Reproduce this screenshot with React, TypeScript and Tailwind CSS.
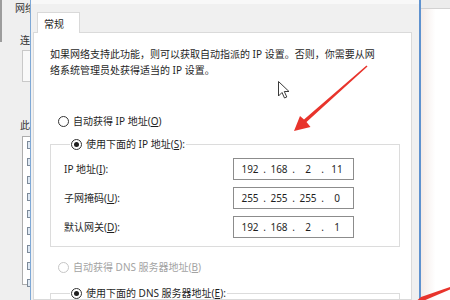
import React from 'react';

const font = { fontFamily: '"Noto Sans", "Noto Sans CJK SC", sans-serif' };

function Radio({ checked = false, disabled = false }: { checked?: boolean; disabled?: boolean }) {
  return (
    <span
      className={`flex w-[11px] h-[11px] shrink-0 items-center justify-center rounded-full border bg-white ${
        disabled ? 'border-[#c6c6c6]' : 'border-[#333333]'
      }`}
    >
      {checked && <span className="block w-[5px] h-[5px] rounded-full bg-[#1e1e1e]" />}
    </span>
  );
}

function RadioRow({
  text,
  hotkey,
  tail = '',
  checked = false,
  disabled = false,
}: {
  text: string;
  hotkey: string;
  tail?: string;
  checked?: boolean;
  disabled?: boolean;
}) {
  return (
    <span
      className={`flex h-[16px] items-center gap-[4px] whitespace-nowrap text-[10px] leading-[16px] ${
        disabled ? 'text-[#a3a3a3]' : 'text-[#1f1f1f]'
      }`}
    >
      <Radio checked={checked} disabled={disabled} />
      <span>
        {text}(<span className="underline">{hotkey}</span>){tail}
      </span>
    </span>
  );
}

function IpBox({ parts }: { parts: string[] }) {
  return (
    <div className="flex h-[22px] w-[121px] items-center border border-[#8c8c8c] bg-white pl-[5px] text-[10px] text-[#1f1f1f]">
      {parts.map((p, i) => (
        <React.Fragment key={i}>
          <span className="w-[22px] text-center">{p}</span>
          {i < 3 && <span className="w-[7px] text-center">.</span>}
        </React.Fragment>
      ))}
    </div>
  );
}

const fields = [
  { label: 'IP 地址', key: 'I', parts: ['192', '168', '2', '11'] },
  { label: '子网掩码', key: 'U', parts: ['255', '255', '255', '0'] },
  { label: '默认网关', key: 'D', parts: ['192', '168', '2', '1'] },
];

export default function App() {
  return (
    <div className="relative flex h-[300px] w-[450px] overflow-hidden bg-[#f0f0f0]" style={font}>
      {/* background window on the left */}
      <div className="flex w-[30px] shrink-0 overflow-hidden bg-[#efefef]">
        <div className="w-[2px] shrink-0">
          <div className="h-[42px] bg-[#9c9c9c]" />
        </div>
        <div className="flex flex-1 flex-col text-[10px] leading-[16px] text-[#333]">
          <span className="ml-[13px] whitespace-nowrap">网络</span>
          <span className="ml-[18px] mt-[16px] whitespace-nowrap">连</span>
          <div className="ml-[20px] mt-[2px] h-[32px] w-[20px] shrink-0 border border-[#c9c9c9] bg-[#f9f9f9]" />
          <span className="ml-[18px] mt-[35px] whitespace-nowrap">此</span>
          <div className="ml-[20px] mt-[3px] flex h-[149px] w-[20px] shrink-0 flex-col gap-[9.3px] border border-[#adadad] bg-white pl-[4px] pt-[4px]">
            {Array.from({ length: 9 }).map((_, i) => (
              <div key={i} className="h-[8px] w-[6px] shrink-0 border border-[#7d8a99] bg-[#dfe9f4]" />
            ))}
          </div>
        </div>
      </div>

      {/* dialog */}
      <div className="w-px shrink-0 bg-[#7ea8d6]" />
      <div className="flex w-[388px] shrink-0 flex-col">
        <div className="h-[4px] shrink-0 bg-[#f8f8f8]" />
        <div className="flex h-[28px] shrink-0 items-end pl-[6px]">
          <div className="relative z-10 -mb-px flex h-[21px] w-[43px] items-center border border-b-0 border-[#d9d9d9] bg-white pl-[6px] pt-[2px] text-[10px] text-[#1f1f1f]">
            常规
          </div>
        </div>
        <div className="ml-[2px] flex min-h-0 w-[379px] flex-1 flex-col overflow-hidden border border-[#dadada] bg-white">
          <p className="shrink-0 whitespace-nowrap pl-[16px] pt-[13px] text-[10px] leading-[16px] text-[#1f1f1f]">
            如果网络支持此功能，则可以获取自动指派的 IP 设置。否则，你需要从网
            <br />
            络系统管理员处获得适当的 IP 设置。
          </p>

          <div className="ml-[24px] mt-[35px] shrink-0">
            <RadioRow text="自动获得 IP 地址" hotkey="O" />
          </div>

          <fieldset className="ml-[16px] mt-[7px] w-[350px] shrink-0 border border-[#dcdcdc] pb-[8px] pl-[13px] pt-[6px]">
            <legend className="ml-[6px] px-[1px]">
              <RadioRow text="使用下面的 IP 地址" hotkey="S" tail=":" checked />
            </legend>
            <div className="flex flex-col gap-[7px]">
              {fields.map((f) => (
                <div key={f.key} className="flex items-center">
                  <span className="w-[169px] whitespace-nowrap text-[10px] text-[#1f1f1f]">
                    {f.label}(<span className="underline">{f.key}</span>):
                  </span>
                  <IpBox parts={f.parts} />
                </div>
              ))}
            </div>
          </fieldset>

          <div className="ml-[24px] mt-[12px] shrink-0">
            <RadioRow text="自动获得 DNS 服务器地址" hotkey="B" disabled />
          </div>

          <fieldset className="ml-[16px] mt-[10px] w-[350px] shrink-0 border border-[#dcdcdc] pb-[8px] pl-[13px] pt-[6px]">
            <legend className="ml-[6px] px-[1px]">
              <RadioRow text="使用下面的 DNS 服务器地址" hotkey="E" tail=":" checked />
            </legend>
            <div className="h-[60px]" />
          </fieldset>
        </div>
      </div>
      <div className="w-[2px] shrink-0 bg-[#5f92cf]" />

      {/* window behind on the right */}
      <div className="flex flex-1 flex-col bg-gradient-to-r from-[#f4ebe8] via-white to-white">
        <div className="h-[9px] shrink-0 border-b border-[#d2d2d2] bg-[#ececec]" />
      </div>

      {/* annotations: red arrows and mouse cursor */}
      <svg className="pointer-events-none absolute left-0 top-0" width="450" height="300" viewBox="0 0 450 300">
        <polygon
          points="367.5,66.5 306.5,122 310.5,127 294,131 300,116 304,119.5 366.5,65.5"
          fill="#e8342c"
        />
        <polygon points="417,300.5 421,297 450,287 450,289.5 423,301" fill="#e8342c" />
        <path
          d="M278.5 81.5 L278.5 96 L282 92.5 L284.5 98 L286.8 97 L284.3 91.5 L289 91.5 Z"
          fill="#ffffff"
          stroke="#3a3a3a"
          strokeWidth="1"
          strokeLinejoin="round"
        />
      </svg>
    </div>
  );
}
